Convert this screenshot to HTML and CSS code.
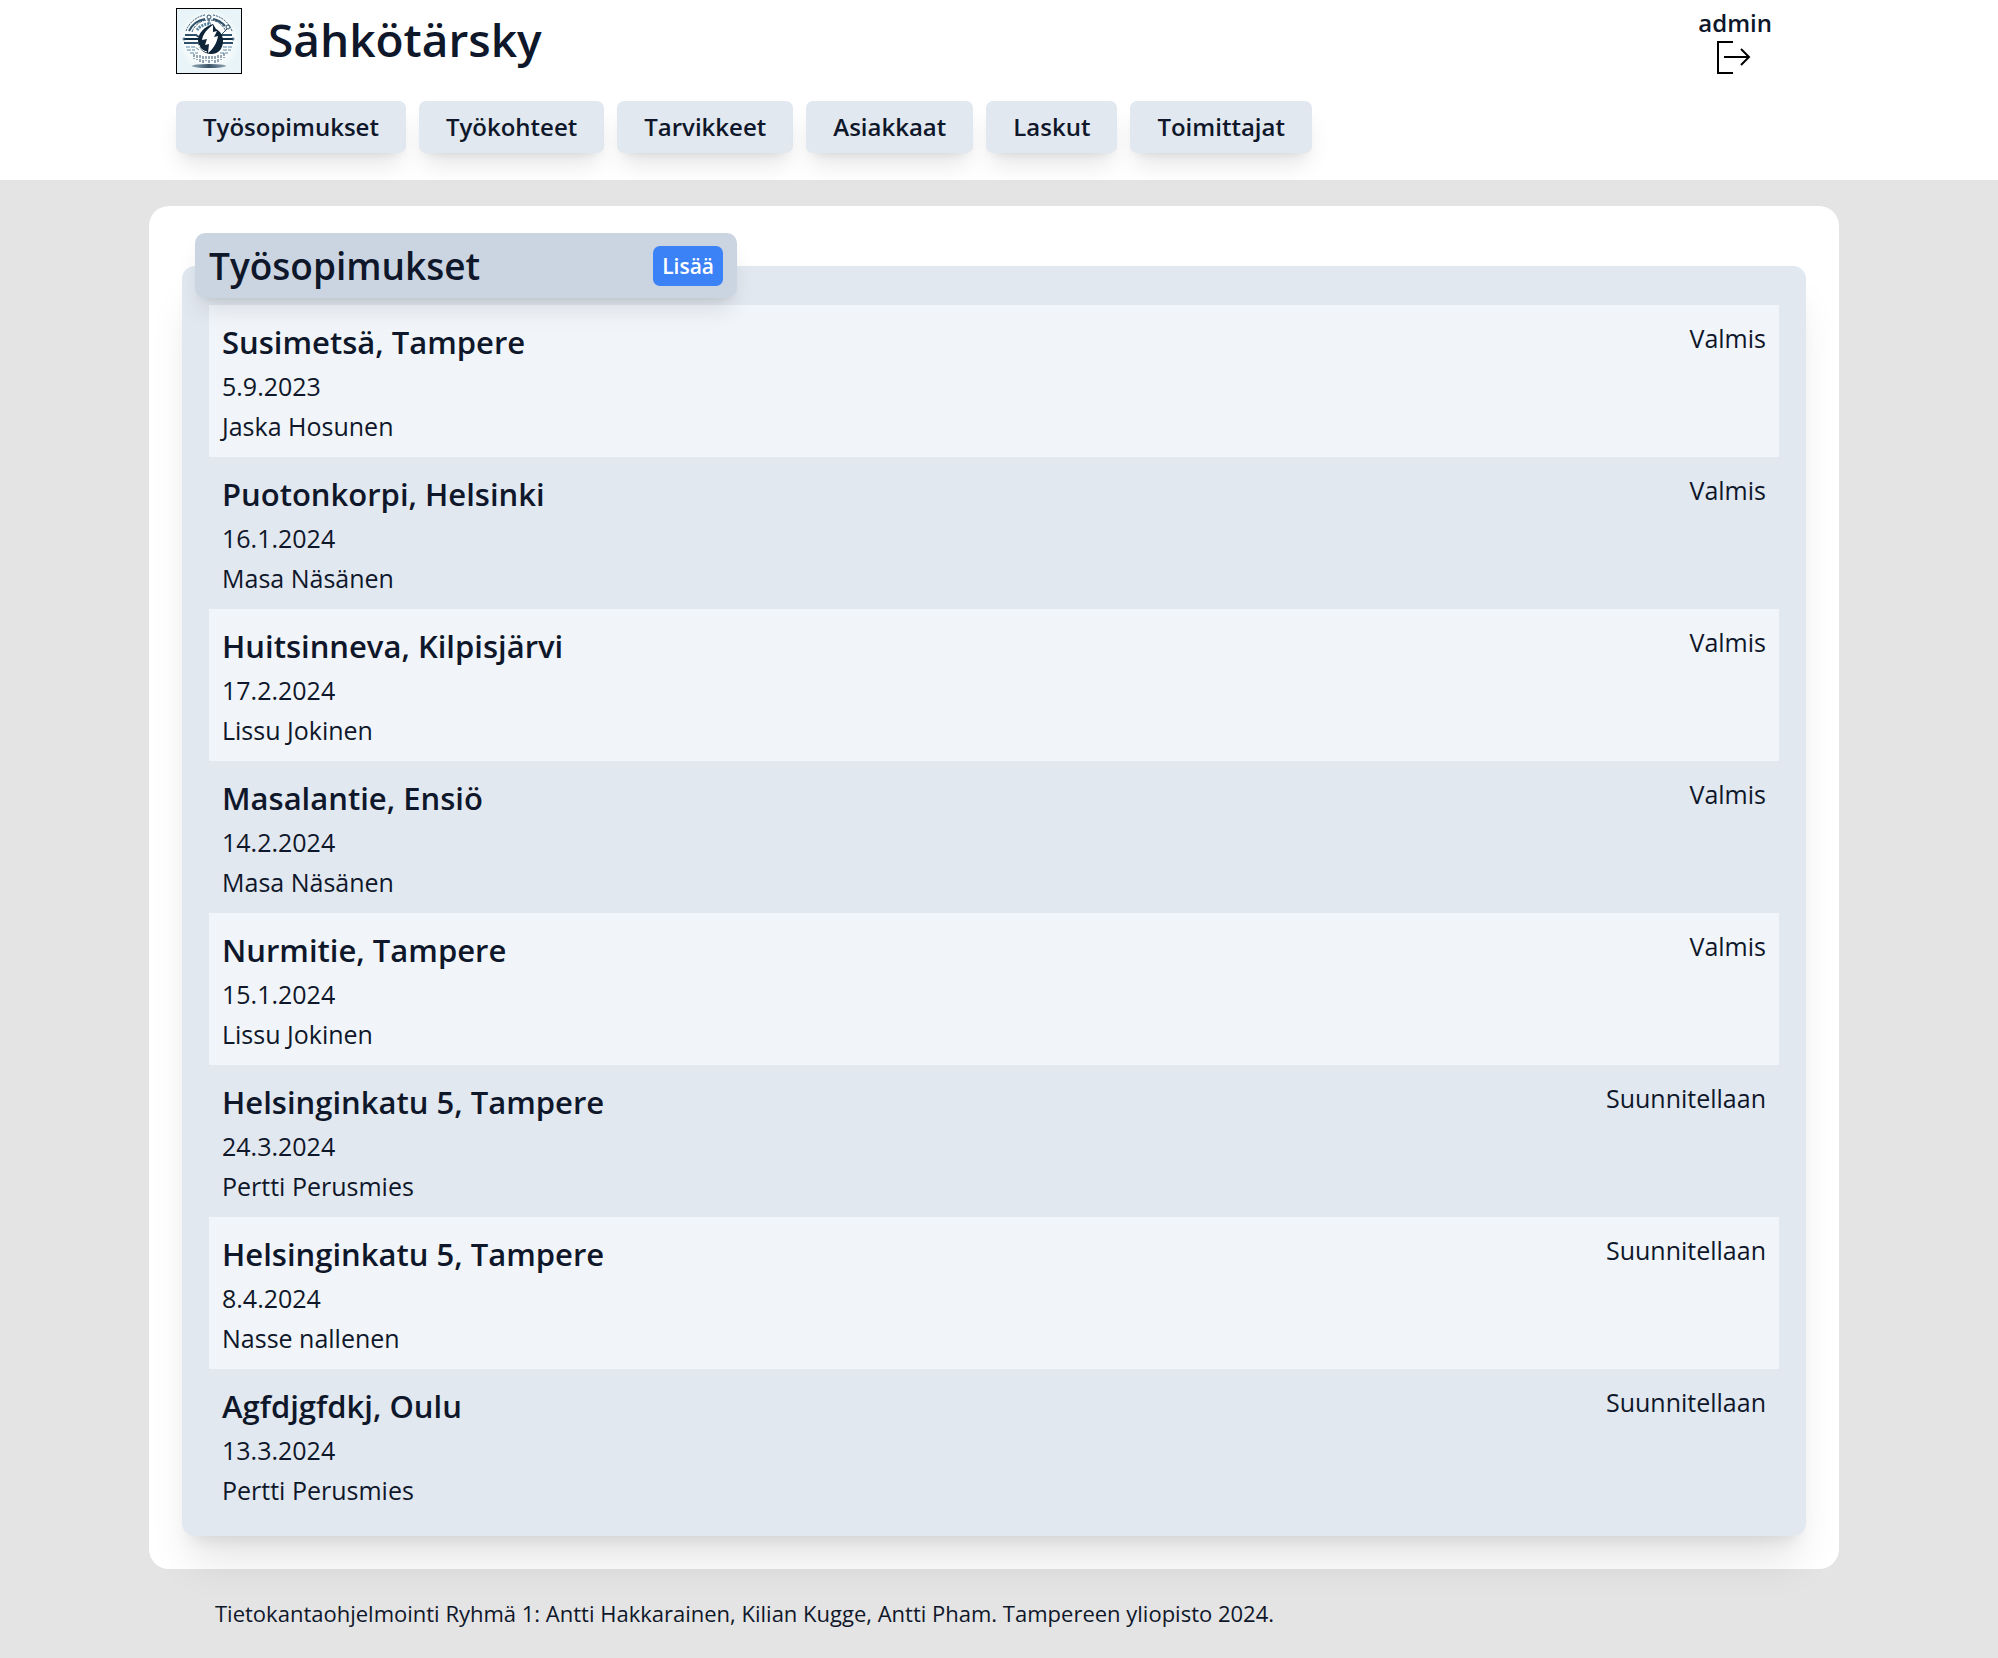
FILE: index.html
```html
<!DOCTYPE html>
<html lang="fi">
<head>
<meta charset="utf-8">
<meta name="viewport" content="width=device-width, initial-scale=1">
<title>Sähkötärsky</title>
<link rel="stylesheet" href="styles.css">
</head>
<body>
<header class="site-header">
  <div class="container header-inner">
    <div class="top-bar">
      <div class="brand">
        <svg class="logo" viewBox="0 0 64 64" role="img" aria-label="Sähkötärsky logo">
          <defs>
            <radialGradient id="sky">
              <stop offset="0.6" stop-color="#fdfefe"/>
              <stop offset="1" stop-color="#e8f4f8"/>
            </radialGradient>
            <linearGradient id="shade">
              <stop offset="0" stop-color="#8fa5b3"/>
              <stop offset="0.5" stop-color="#3c5466"/>
              <stop offset="1" stop-color="#8fa5b3"/>
            </linearGradient>
          </defs>
          <rect width="64" height="64" fill="url(#sky)"/>
          <g fill="none" stroke="#2f506a">
            <path d="M9 22A25 25 0 0 1 28 6M36 6A25 25 0 0 1 55 22" stroke-width="1" stroke-dasharray="2 1"/>
            <path d="M12 22A22 22 0 0 1 28 10M36 10A22 22 0 0 1 48 17" stroke-width="2"/>
            <path d="M15 23A18 18 0 0 1 49 23" stroke-width="1" stroke-dasharray="3 1"/>
            <path d="M20 21A15 15 0 0 1 34 15" stroke="#5b86a5" stroke-width="3" stroke-dasharray="2 1"/>
            <circle cx="32" cy="8" r="2"/>
            <path d="M32 10v5M50 20l-5 5"/>
            <circle cx="51" cy="18" r="2"/>
            <path d="M8 26h11l3 2M7 34h14M42 26h13M44 34h12" stroke-width="2"/>
            <path d="M7 30h15M43 30h13" stroke="#102a40" stroke-width="2"/>
            <path d="M9 38h9l4 3M46 38h9M10 41h8M13 44h8M46 41h8M43 44h8" stroke="#5b86a5" stroke-dasharray="4 1"/>
            <path d="M17 45v5M20 46v5M23 46v7M26 47v7M29 47v5M32 47v8M35 47v5M38 47v7M41 46v7M44 46v5M47 44v5" stroke-dasharray="3 1"/>
            <circle cx="7" cy="30" r="1"/>
            <circle cx="56" cy="30" r="1"/>
          </g>
          <path d="M36 15C27 18 21 24 21 32c0 8 6 13 13 13 8 0 12-6 12-13 0-6-3-10-7-12z" fill="#0c2338"/>
          <path d="M36 16c-6 4-10 9-11 15l5-1-2 6 4-1-1 9c5-4 9-10 10-17l-4 1 3-6-4 1z" fill="#fff"/>
          <path d="M22 36c1 4 4 6 8 7" fill="none" stroke="#fff"/>
          <ellipse cx="32" cy="57" rx="17" ry="2" fill="url(#shade)"/>
        </svg>
        <h1 class="brand-name">Sähkötärsky</h1>
      </div>
      <div class="account">
        <span class="account-name">admin</span>
        <button class="logout" type="button" aria-label="Kirjaudu ulos">
          <svg viewBox="0 0 38 34" width="38" height="34" fill="none" stroke="#000" stroke-width="2" aria-hidden="true">
            <path d="M17 2H2v31h15"/>
            <path d="M8 17h25M25 9l8 8-8 8"/>
          </svg>
        </button>
      </div>
    </div>
    <nav class="nav" aria-label="Päävalikko">
      <a class="nav-link" href="#tyosopimukset">Työsopimukset</a>
      <a class="nav-link" href="#tyokohteet">Työkohteet</a>
      <a class="nav-link" href="#tarvikkeet">Tarvikkeet</a>
      <a class="nav-link" href="#asiakkaat">Asiakkaat</a>
      <a class="nav-link" href="#laskut">Laskut</a>
      <a class="nav-link" href="#toimittajat">Toimittajat</a>
    </nav>
  </div>
</header>
<div class="page">
  <main class="container card">
    <section class="panel" id="tyosopimukset">
      <div class="panel-header">
        <h2 class="panel-title">Työsopimukset</h2>
        <button class="add-button" type="button">Lisää</button>
      </div>
      <ul class="contracts">
        <li class="contract"><div><h3 class="contract-title">Susimetsä, Tampere</h3><p>5.9.2023</p><p>Jaska Hosunen</p></div><span>Valmis</span></li>
        <li class="contract"><div><h3 class="contract-title">Puotonkorpi, Helsinki</h3><p>16.1.2024</p><p>Masa Näsänen</p></div><span>Valmis</span></li>
        <li class="contract"><div><h3 class="contract-title">Huitsinneva, Kilpisjärvi</h3><p>17.2.2024</p><p>Lissu Jokinen</p></div><span>Valmis</span></li>
        <li class="contract"><div><h3 class="contract-title">Masalantie, Ensiö</h3><p>14.2.2024</p><p>Masa Näsänen</p></div><span>Valmis</span></li>
        <li class="contract"><div><h3 class="contract-title">Nurmitie, Tampere</h3><p>15.1.2024</p><p>Lissu Jokinen</p></div><span>Valmis</span></li>
        <li class="contract"><div><h3 class="contract-title">Helsinginkatu 5, Tampere</h3><p>24.3.2024</p><p>Pertti Perusmies</p></div><span>Suunnitellaan</span></li>
        <li class="contract"><div><h3 class="contract-title">Helsinginkatu 5, Tampere</h3><p>8.4.2024</p><p>Nasse nallenen</p></div><span>Suunnitellaan</span></li>
        <li class="contract"><div><h3 class="contract-title">Agfdjgfdkj, Oulu</h3><p>13.3.2024</p><p>Pertti Perusmies</p></div><span>Suunnitellaan</span></li>
      </ul>
    </section>
  </main>
  <footer class="container footer">Tietokantaohjelmointi Ryhmä 1: Antti Hakkarainen, Kilian Kugge, Antti Pham. Tampereen yliopisto 2024.</footer>
</div>
</body>
</html>
```
FILE: styles.css
```css
*,
*::before,
*::after {
  box-sizing: border-box;
}

html {
  background: #e4e4e4;
}

body {
  margin: 0;
  color: #0f172a;
  font-family: "Open Sans", "Noto Sans", sans-serif;
  font-size: 25px;
  line-height: 40px;
}

h1, h2, h3, p, ul {
  margin: 0;
  padding: 0;
}

h1, h2, h3 {
  font-weight: 600;
}

button {
  border: 0;
  font-family: inherit;
  cursor: pointer;
}

.container {
  width: 100%;
  max-width: 1690px;
  margin: 0 auto;
}

.site-header {
  padding-right: 10px;
  background: #fff;
}

.header-inner {
  padding: 8px 27px 27px;
}

.top-bar {
  display: flex;
  justify-content: space-between;
  margin-bottom: 27px;
}

.brand {
  display: flex;
  align-items: flex-start;
  gap: 26px;
}

.logo {
  width: 66px;
  height: 66px;
  border: 1px solid #000;
}

.brand-name {
  font-size: 46px;
  line-height: 62px;
}

.account {
  display: flex;
  flex-direction: column;
  align-items: center;
  gap: 2px;
  padding-right: 40px;
  font-size: 24px;
  font-weight: 600;
  line-height: 30px;
}

.logout {
  display: flex;
  padding: 0;
  background: none;
}

.nav {
  display: flex;
  flex-wrap: wrap;
  gap: 13px;
}

.nav-link {
  padding: 6px 27px;
  border-radius: 7px;
  background: #e2e8f0;
  box-shadow: 0 16px 25px -5px rgb(0 0 0 / 10%), 0 7px 10px -7px rgb(0 0 0 / 10%);
  color: inherit;
  font-size: 24px;
  font-weight: 600;
  text-decoration: none;
}

.page {
  padding: 26px 10px 0 0;
}

.card {
  padding: 60px 33px 33px;
  border-radius: 20px;
  background: #fff;
}

.panel {
  display: flow-root;
  padding: 0 27px 15px;
  border-radius: 13px;
  background: #e2e8f0;
  box-shadow: 0 33px 41px -8px rgb(0 0 0 / 10%), 0 13px 16px -10px rgb(0 0 0 / 10%);
}

/* The title tab straddles the panel's top edge. */
.panel-header {
  position: relative;
  display: flex;
  align-items: center;
  justify-content: space-between;
  width: 542px;
  max-width: 100%;
  height: 65px;
  margin: -33px 0 7px -14px;
  padding: 0 14px;
  border-radius: 10px;
  background: #cbd5e1;
  box-shadow: 0 16px 25px -5px rgb(0 0 0 / 10%), 0 7px 10px -7px rgb(0 0 0 / 10%);
}

.panel-title {
  font-size: 37px;
}

.add-button {
  height: 40px;
  padding: 0 9px;
  border-radius: 7px;
  background: #3b82f6;
  color: #fff;
  font-size: 21px;
  font-weight: 600;
}

.contracts {
  list-style: none;
}

.contract {
  display: flex;
  justify-content: space-between;
  padding: 13px 13px 11px;
}

.contract:nth-child(odd) {
  background: #f1f5f9;
}

.contract-title {
  font-size: 31px;
  line-height: 48px;
}

.footer {
  padding: 26px 66px;
  font-size: 22px;
  line-height: 36px;
}
```
